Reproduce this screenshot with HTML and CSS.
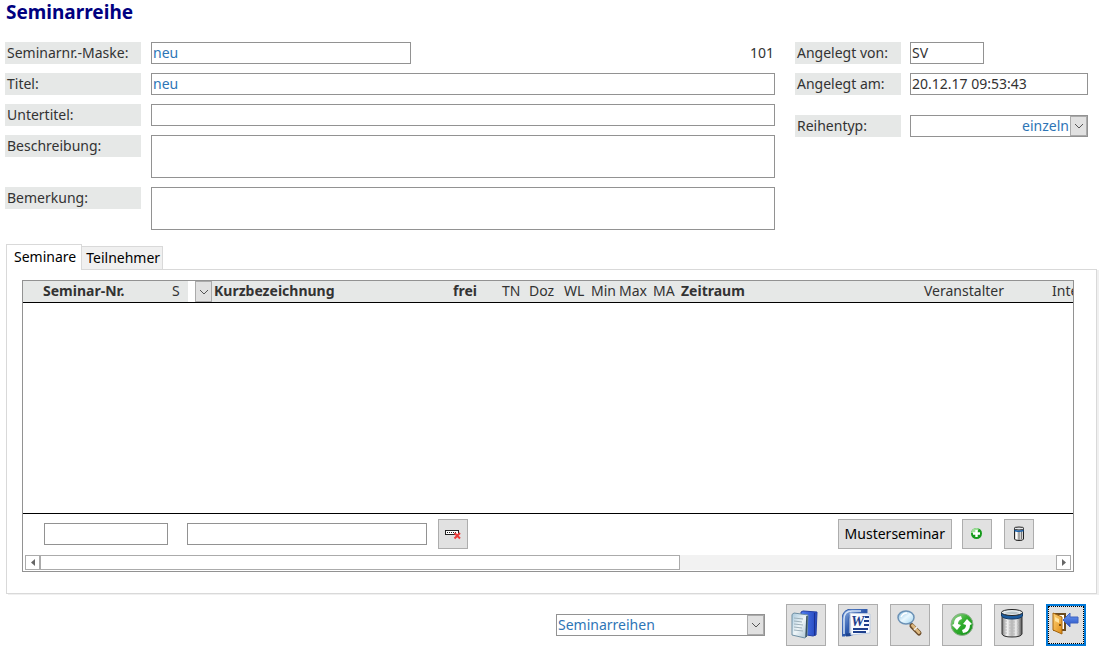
FILE: index.html
```html
<!DOCTYPE html>
<html lang="de">
<head>
    <meta charset="UTF-8">
    <meta name="viewport" content="width=device-width, initial-scale=1.0">
    <title>Seminarreihe</title>
    <link rel="stylesheet" href="styles.css">
</head>
<body>

<h1 class="page-title">Seminarreihe</h1>

<form class="details">
    <div class="details-main">
        <label class="field-label" for="maske">Seminarnr.-Maske:</label>
        <div class="maske-row">
            <input class="field field-maske" type="text" id="maske" value="neu">
            <span class="series-id">101</span>
        </div>

        <label class="field-label" for="titel">Titel:</label>
        <input class="field" type="text" id="titel" value="neu">

        <label class="field-label" for="untertitel">Untertitel:</label>
        <input class="field" type="text" id="untertitel">

        <label class="field-label" for="beschreibung">Beschreibung:</label>
        <textarea class="field field-area" id="beschreibung"></textarea>

        <label class="field-label" for="bemerkung">Bemerkung:</label>
        <textarea class="field field-area" id="bemerkung"></textarea>
    </div>

    <div class="details-side">
        <div class="side-grid">
            <label class="field-label" for="von">Angelegt von:</label>
            <input class="field field-dark field-user" type="text" id="von" value="SV">

            <label class="field-label" for="am">Angelegt am:</label>
            <input class="field field-dark" type="text" id="am" value="20.12.17 09:53:43">
        </div>
        <div class="side-grid">
            <label class="field-label" for="typ">Reihentyp:</label>
            <div class="combo">
                <select class="field combo-select combo-right" id="typ">
                    <option>einzeln</option>
                </select>
                <span class="combo-arrow"><svg width="10" height="6" viewBox="0 0 10 6"><path d="M1 1l4 4 4-4"/></svg></span>
            </div>
        </div>
    </div>
</form>

<div class="tabs">
    <button class="tab active" type="button">Seminare</button>
    <button class="tab" type="button">Teilnehmer</button>
</div>

<div class="panel">
    <div class="subform">
        <div class="list">
            <table class="seminars">
                <colgroup>
                    <col class="c-mark"><col class="c-nr"><col class="c-s"><col class="c-gap"><col class="c-pick">
                    <col class="c-name"><col class="c-frei"><col class="c-tn"><col class="c-doz"><col class="c-wl">
                    <col class="c-min"><col class="c-max"><col class="c-ma"><col class="c-zeit"><col class="c-ver"><col class="c-int">
                </colgroup>
                <thead>
                    <tr>
                        <th></th>
                        <th class="strong">Seminar-Nr.</th>
                        <th>S</th>
                        <th class="blank"></th>
                        <th>
                            <div class="combo">
                                <select class="combo-select combo-small" aria-label="Status"><option></option></select>
                                <span class="combo-arrow"><svg width="10" height="6" viewBox="0 0 10 6"><path d="M1 1l4 4 4-4"/></svg></span>
                            </div>
                        </th>
                        <th class="strong">Kurzbezeichnung</th>
                        <th class="strong">frei</th>
                        <th>TN</th>
                        <th>Doz</th>
                        <th>WL</th>
                        <th>Min</th>
                        <th>Max</th>
                        <th>MA</th>
                        <th class="strong">Zeitraum</th>
                        <th>Veranstalter</th>
                        <th>Inte</th>
                    </tr>
                </thead>
                <tbody></tbody>
            </table>
        </div>

        <div class="list-footer">
            <input class="field filter-nr" type="text" aria-label="Seminar-Nr.">
            <input class="field filter-name" type="text" aria-label="Kurzbezeichnung">
            <button class="btn btn-small" type="button" aria-label="Filter entfernen">
                <svg width="16" height="16" viewBox="0 0 16 16">
                    <rect x=".5" y="4.5" width="13" height="4" fill="#fff" stroke="#222"/>
                    <path d="M2 6.5h10" stroke="#222" stroke-dasharray="1 1"/>
                    <path d="M9.500 7l5.500 5.500M15 7l-5.500 5.500" stroke="#ee3b3b" stroke-width="2"/>
                </svg>
            </button>
            <div class="footer-actions">
                <button class="btn btn-text" type="button">Musterseminar</button>
                <button class="btn btn-small" type="button" aria-label="Neu">
                    <svg width="16" height="16" viewBox="0 0 16 16">
                        <circle cx="7.500" cy="7.500" r="5.500" fill="#159a1b"/>
                        <path d="M2 7a5.500 5.500 0 0 1 8-4.500L7.500 7.500z" fill="#9fdf9a"/>
                        <path d="M7.500 4v7M4 7.500h7" stroke="#fff" stroke-width="2.400"/>
                    </svg>
                </button>
                <button class="btn btn-small btn-delete" type="button" aria-label="L&ouml;schen">
                    <svg width="16" height="16" viewBox="0 0 16 16">
                        <path d="M3.500 3v10q0 1.500 4.500 1.500t4.500-1.500V3z" fill="#d4d4d4" stroke="#222"/>
                        <path d="M5.500 5v8" stroke="#fff" stroke-width="1.500"/>
                        <path d="M8 5v9M10.500 5v8" stroke="#777"/>
                        <ellipse cx="8" cy="2.500" rx="5" ry="1.500" fill="#e5e8ec" stroke="#222"/>
                        <path d="M3.500 4.500q4.500 1.500 9 0" fill="none" stroke="#1b62ac" stroke-width="1.500"/>
                    </svg>
                </button>
            </div>
        </div>

        <div class="scrollbar">
            <button class="scroll-btn" type="button" aria-label="Nach links"><svg width="4" height="7" viewBox="0 0 4 7"><path d="M4 0v7L0 3.500z"/></svg></button>
            <div class="scroll-track"><div class="scroll-thumb"></div></div>
            <button class="scroll-btn" type="button" aria-label="Nach rechts"><svg width="4" height="7" viewBox="0 0 4 7"><path d="M0 0v7l4-3.500z"/></svg></button>
        </div>
    </div>
</div>

<div class="toolbar">
    <div class="combo combo-report">
        <select class="field combo-select" aria-label="Bericht">
            <option>Seminarreihen</option>
        </select>
        <span class="combo-arrow"><svg width="10" height="6" viewBox="0 0 10 6"><path d="M1 1l4 4 4-4"/></svg></span>
    </div>

    <div class="toolbar-buttons">
        <!-- report -->
        <button class="btn btn-large" type="button" aria-label="Bericht">
            <svg width="32" height="32" viewBox="0 0 32 32">
                <defs>
                    <linearGradient id="book" x2="1"><stop offset="0" stop-color="#4f7df0"/><stop offset="1" stop-color="#2345bd"/></linearGradient>
                    <linearGradient id="sheet" x2="1" y2="1"><stop offset="0" stop-color="#a9c9dd"/><stop offset=".5" stop-color="#eef5f8"/><stop offset="1" stop-color="#a4bfce"/></linearGradient>
                </defs>
                <path d="M11 3l2-1 14 1-1 23-3 1-12-2z" fill="url(#book)" stroke="#2440a4"/>
                <path d="M24.500 4v22" stroke="#1b3190"/>
                <path d="M2 5.500L4 4l14 2-1 21-2 2-13-3z" fill="url(#sheet)" stroke="#6f8fa3"/>
                <path d="M17 7l-1 21" stroke="#38505e" stroke-width="1.500"/>
                <path d="M4 9l9 1M4 12l8 1M4 15l9 1M4 18l8 1M4 21l9 1" stroke="#9db0ba"/>
            </svg>
        </button>
        <!-- word export -->
        <button class="btn btn-large" type="button" aria-label="Word">
            <svg width="32" height="32" viewBox="0 0 32 32">
                <defs>
                    <linearGradient id="word" x2="1" y2="1"><stop offset="0" stop-color="#92b4e4"/><stop offset=".5" stop-color="#2c58ac"/><stop offset="1" stop-color="#143782"/></linearGradient>
                </defs>
                <path d="M0 27V9Q1 0 10 0h15v4H13q-6 0-6 6v14l-4 3z" fill="url(#word)" stroke="#345fae"/>
                <path d="M2 25V10q0-8 8-8h9" fill="none" stroke="#d4e3f7" stroke-width="1.500"/>
                <path d="M4 26q7 0 9-4" fill="none" stroke="#1d438f" stroke-width="3"/>
                <path d="M8 4l20 1v19l-19 2z" fill="#f8fbff" stroke="#b9c9e2"/>
                <text class="word-letter" x="9" y="17">W</text>
                <path d="M23 8h4M22 12h5M22 16h5M11 20h15M11 23h13" stroke="#1d3f8c" stroke-width="2"/>
            </svg>
        </button>
        <!-- search -->
        <button class="btn btn-large" type="button" aria-label="Suchen">
            <svg width="32" height="32" viewBox="0 0 32 32">
                <defs>
                    <linearGradient id="lens" x2="1" y2="1"><stop offset="0" stop-color="#7fb9e0"/><stop offset=".5" stop-color="#eaf8ff"/><stop offset="1" stop-color="#9ed3ee"/></linearGradient>
                </defs>
                <path d="M16 14l3 3" stroke="#777" stroke-width="3"/>
                <path d="M18 17l7 7" stroke="#6d4d2a" stroke-width="5" stroke-linecap="round"/>
                <path d="M18.500 16.500l6.500 7" stroke="#dcb880" stroke-width="3" stroke-linecap="round"/>
                <path d="M20 21l3-3" stroke="#eee" stroke-width="1.500"/>
                <ellipse cx="12" cy="8.500" rx="8" ry="6.500" fill="url(#lens)" stroke="#6c92b6" stroke-width="1.500"/>
                <path d="M7 8q2-4 6-4" fill="none" stroke="#fff" stroke-width="1.500"/>
            </svg>
        </button>
        <!-- refresh -->
        <button class="btn btn-large" type="button" aria-label="Aktualisieren">
            <svg width="32" height="32" viewBox="0 0 32 32">
                <defs>
                    <linearGradient id="green" x2="1" y2="1"><stop offset="0" stop-color="#a7d8a2"/><stop offset=".45" stop-color="#35b02f"/><stop offset="1" stop-color="#0c8b16"/></linearGradient>
                </defs>
                <circle cx="16" cy="15.500" r="11" fill="url(#green)" stroke="#8cae8a"/>
                <path d="M15 7q-7 1-7 8l-2 1 5 5 4-5-3-1q0-4 4-5z" fill="#fff"/>
                <path d="M17 24q7-1 7-8l2-1-5-5-4 5 3 1q0 4-4 5z" fill="#fff"/>
            </svg>
        </button>
        <!-- delete -->
        <button class="btn btn-large" type="button" aria-label="L&ouml;schen">
            <svg width="32" height="32" viewBox="0 0 32 32">
                <defs>
                    <linearGradient id="can" x2="1"><stop offset="0" stop-color="#777"/><stop offset=".25" stop-color="#f6f6f6"/><stop offset=".5" stop-color="#b4b4b4"/><stop offset=".7" stop-color="#eee"/><stop offset="1" stop-color="#555"/></linearGradient>
                </defs>
                <path d="M4 4v21q1 3 10 3t10-3V4z" fill="url(#can)" stroke="#333"/>
                <path d="M8 11v14M12 12v15M16 12v15M20 11v14" stroke="#bbb" stroke-dasharray="2 1"/>
                <path d="M3.500 4v3q2 3 10.500 3t10.500-3V4z" fill="#1b5c9f" stroke="#153b66"/>
                <ellipse cx="14" cy="3.500" rx="10.500" ry="3" fill="#e5ebed" stroke="#222"/>
                <path d="M6 4q8-3 16 0-8 2-16 0" fill="#b9c6ca"/>
            </svg>
        </button>
        <!-- close -->
        <button class="btn btn-large btn-focus" type="button" aria-label="Schlie&szlig;en">
            <svg width="32" height="32" viewBox="0 0 32 32">
                <defs>
                    <linearGradient id="door" x2="1" y2="1"><stop offset="0" stop-color="#ffd47a"/><stop offset="1" stop-color="#df8b14"/></linearGradient>
                    <linearGradient id="arrow" y2="1" x2="0"><stop offset="0" stop-color="#6f9cf4"/><stop offset="1" stop-color="#234fc2"/></linearGradient>
                </defs>
                <path d="M4 5h11v16H4z" fill="#fff" stroke="#6b4a1f" stroke-width="2"/>
                <path d="M3 4l9 4v17l-9-4z" fill="url(#door)" stroke="#a4640f"/>
                <path d="M5 8l4 2v4l-4-2z" fill="#ffe3a0"/>
                <circle cx="10" cy="16" r="1" fill="#5a3505"/>
                <path d="M13 11l7-7v4h8v6h-8v4z" fill="url(#arrow)" stroke="#3f62c0"/>
            </svg>
        </button>
    </div>
</div>

</body>
</html>
```
FILE: styles.css
```css
* {
    box-sizing: border-box;
}

body {
    margin: 0;
    padding: 0 6px 0 5px;
    background-color: #fff;
    color: #333;
    font-family: "Noto Sans", sans-serif;
    font-size: 14px;
    line-height: 20px;
}

input, textarea, select, button {
    font: inherit;
    color: inherit;
    margin: 0;
    border-radius: 0;
}

svg {
    display: block;
    fill: none;
}

.page-title {
    margin: 0 0 18px 1px;
    font-size: 19px;
    line-height: 24px;
    color: #000080;
}

/* Details */

.details {
    display: flex;
    align-items: flex-start;
    gap: 20px;
    padding-right: 10px;
}

.details-main {
    flex: 1;
    display: grid;
    grid-template-columns: 136px 1fr;
    gap: 9px 10px;
    align-items: start;
}

.details-side {
    width: 293px;
    display: flex;
    flex-direction: column;
    gap: 20px;
}

.side-grid {
    display: grid;
    grid-template-columns: 106px 1fr;
    gap: 9px;
    align-items: start;
}

.field-label {
    height: 22px;
    padding: 1px 2px;
    background-color: #e6e8e7;
}

.field {
    display: block;
    width: 100%;
    height: 22px;
    padding: 0 1px 2px;
    border: 1px solid #929292;
    background-color: #fff;
    color: #2e75b6;
    outline: none;
}

.field-dark {
    color: #333;
}

.field-area {
    height: 43px;
    resize: none;
}

.maske-row {
    display: flex;
    justify-content: space-between;
}

.field-maske {
    width: 260px;
}

.series-id {
    padding: 1px;
}

.field-user {
    width: 74px;
}

/* Combo boxes */

.combo {
    position: relative;
}

.combo-select {
    appearance: none;
    padding-bottom: 0;
}

.combo-right {
    padding-right: 18px;
    text-align-last: right;
}

.combo-small {
    display: block;
    width: 17px;
    height: 21px;
    padding: 0;
    border: 0;
}

.combo-arrow {
    position: absolute;
    top: 1px;
    right: 1px;
    bottom: 1px;
    width: 17px;
    display: flex;
    align-items: center;
    justify-content: center;
    border: 1px solid #ababab;
    background-color: #e1e1e1;
    pointer-events: none;
}

.combo-arrow path {
    stroke: #555;
}

/* Tabs */

.tabs {
    display: flex;
    align-items: flex-end;
    margin: 14px 0 0 1px;
    color: #000;
}

.tab {
    height: 23px;
    padding: 0 2px 0 4px;
    border: 1px solid #d9d9d9;
    border-width: 1px 1px 0 0;
    background-color: #f0f0f0;
}

.tab.active {
    height: 26px;
    margin-bottom: -1px;
    padding: 0 5px 2px 7px;
    border-left-width: 1px;
    background-color: #fff;
    z-index: 1;
}

.panel {
    margin: 0 1px;
    padding: 10px 22px 21px 15px;
    border: 1px solid #d9d9d9;
    box-shadow: 2px 1px 0 #f0f0f0;
}

.subform {
    border: 1px solid #929292;
}

.list {
    height: 233px;
    overflow: hidden;
    border-bottom: 1px solid #000;
}

.seminars {
    width: 1055px;
    table-layout: fixed;
    border-collapse: separate;
    border-spacing: 0;
}

.seminars th {
    height: 22px;
    padding: 0;
    border-bottom: 1px solid #000;
    background-color: #e6e8e7;
    font-weight: normal;
    line-height: 19px;
    text-align: left;
    vertical-align: top;
    white-space: nowrap;
}

.seminars .strong {
    font-weight: bold;
}

.seminars .blank {
    background-color: #fff;
}

.seminars .combo {
    width: 17px;
}

.seminars .combo-arrow {
    top: 0;
    right: 0;
    bottom: 0;
}

.c-mark { width: 20px; }
.c-nr { width: 129px; }
.c-s { width: 16px; }
.c-gap { width: 7px; }
.c-pick { width: 19px; }
.c-name { width: 239px; }
.c-frei { width: 49px; }
.c-tn { width: 27px; }
.c-doz { width: 35px; }
.c-wl { width: 27px; }
.c-min { width: 28px; }
.c-max { width: 34px; }
.c-ma { width: 28px; }
.c-zeit { width: 243px; }
.c-ver { width: 128px; }
.c-int { width: 26px; }

.list-footer {
    display: flex;
    align-items: center;
    padding: 5px 39px 6px 21px;
}

.filter-nr {
    width: 124px;
    margin-right: 19px;
}

.filter-name {
    width: 240px;
    margin-right: 11px;
}

.footer-actions {
    display: flex;
    gap: 10px;
    margin-left: auto;
}

.btn {
    display: flex;
    align-items: center;
    justify-content: center;
    padding: 0;
    border: 1px solid #adadad;
    background-color: #e1e1e1;
    color: #000;
}

.btn-small {
    width: 30px;
    height: 30px;
}

.btn-text {
    height: 30px;
    padding: 0 6px;
}

.btn-delete {
    margin-left: 2px;
}

.scrollbar {
    display: flex;
    height: 15px;
    margin: 0 2px 1px;
}

.scroll-btn {
    width: 15px;
    display: flex;
    align-items: center;
    justify-content: center;
    padding: 0;
    border: 1px solid #ababab;
    background-color: #fff;
}

.scroll-btn path {
    fill: #666;
}

.scroll-track {
    flex: 1;
    background-color: #f2f2f2;
}

.scroll-thumb {
    width: 63%;
    height: 100%;
    border: 1px solid #ababab;
    background-color: #fff;
}

/* Toolbar */

.toolbar {
    display: flex;
    align-items: center;
    justify-content: flex-end;
    gap: 21px;
    padding: 10px 12px 6px 0;
}

.combo-report {
    width: 209px;
}

.toolbar-buttons {
    display: flex;
    gap: 12px;
}

.btn-large {
    width: 40px;
    height: 42px;
}

.btn-focus {
    border: 2px solid #0078d7;
    outline: 1px dotted #000;
    outline-offset: -3px;
}

.word-letter {
    fill: #1d3f8c;
    font-family: "Liberation Serif", serif;
    font-size: 15px;
    font-style: italic;
    font-weight: bold;
}
```
